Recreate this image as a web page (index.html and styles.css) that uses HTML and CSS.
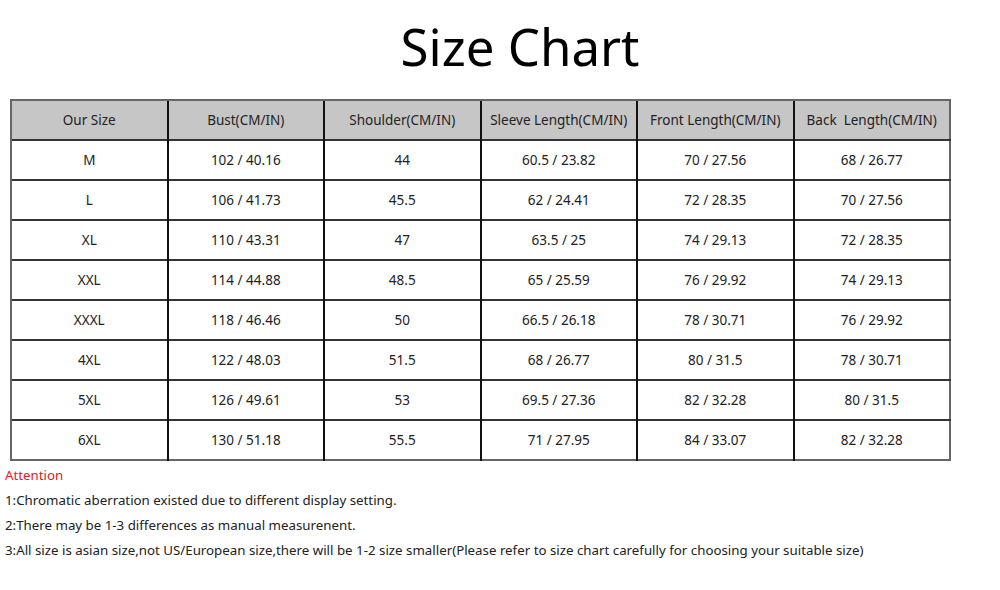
FILE: index.html
```html
<!DOCTYPE html>
<html>
<head>
<meta charset="utf-8">
<link rel="stylesheet" href="styles.css">
</head>
<body>
<h1 class="title">Size Chart</h1>
<table class="chart">
<thead>
<tr><th>Our Size</th><th>Bust(CM/IN)</th><th>Shoulder(CM/IN)</th><th>Sleeve Length(CM/IN)</th><th>Front Length(CM/IN)</th><th>Back&nbsp; Length(CM/IN)</th></tr>
</thead>
<tbody>
<tr><td>M</td><td>102 / 40.16</td><td>44</td><td>60.5 / 23.82</td><td>70 / 27.56</td><td>68 / 26.77</td></tr>
<tr><td>L</td><td>106 / 41.73</td><td>45.5</td><td>62 / 24.41</td><td>72 / 28.35</td><td>70 / 27.56</td></tr>
<tr><td>XL</td><td>110 / 43.31</td><td>47</td><td>63.5 / 25</td><td>74 / 29.13</td><td>72 / 28.35</td></tr>
<tr><td>XXL</td><td>114 / 44.88</td><td>48.5</td><td>65 / 25.59</td><td>76 / 29.92</td><td>74 / 29.13</td></tr>
<tr><td>XXXL</td><td>118 / 46.46</td><td>50</td><td>66.5 / 26.18</td><td>78 / 30.71</td><td>76 / 29.92</td></tr>
<tr><td>4XL</td><td>122 / 48.03</td><td>51.5</td><td>68 / 26.77</td><td>80 / 31.5</td><td>78 / 30.71</td></tr>
<tr><td>5XL</td><td>126 / 49.61</td><td>53</td><td>69.5 / 27.36</td><td>82 / 32.28</td><td>80 / 31.5</td></tr>
<tr><td>6XL</td><td>130 / 51.18</td><td>55.5</td><td>71 / 27.95</td><td>84 / 33.07</td><td>82 / 32.28</td></tr>
</tbody>
</table>
<div class="notes">
<p class="attention">Attention</p>
<p>1:Chromatic aberration existed due to different display setting.</p>
<p>2:There may be 1-3 differences as manual measurenent.</p>
<p>3:All size is asian size,not US/European size,there will be 1-2 size smaller(Please refer to size chart carefully for choosing your suitable size)</p>
</div>
</body>
</html>
```
FILE: styles.css
```css
html, body {
  margin: 0;
  padding: 0;
  background: #fff;
}
body {
  font-family: "Noto Sans", "Open Sans", sans-serif;
  color: #222;
}
.title {
  margin: 0;
  height: 99px;
  padding-left: 40px;
  box-sizing: border-box;
  text-align: center;
  font-weight: normal;
  font-size: 51px;
  line-height: 92px;
  color: #000;
}
.chart {
  margin-left: 10px;
  width: 941px;
  border-collapse: collapse;
  table-layout: fixed;
  border: 2px solid #666;
  font-size: 13.5px;
}
.chart th, .chart td {
  height: 38px;
  padding: 0;
  text-align: center;
  font-weight: normal;
  border-left: 2px solid #111;
  border-top: 2px solid #333;
  color: #222;
}
.chart th {
  background: #c6c6c6;
}
.chart th:first-child, .chart td:first-child {
  border-left: 2px solid #666;
}
.chart thead th {
  border-top: 2px solid #666;
}
.notes {
  padding-left: 5px;
  font-size: 13.3px;
}
.notes p {
  margin: 0;
  height: 25px;
  line-height: 25px;
}
.notes .attention {
  color: #e02020;
  height: 27px;
  line-height: 29px;
}
```
